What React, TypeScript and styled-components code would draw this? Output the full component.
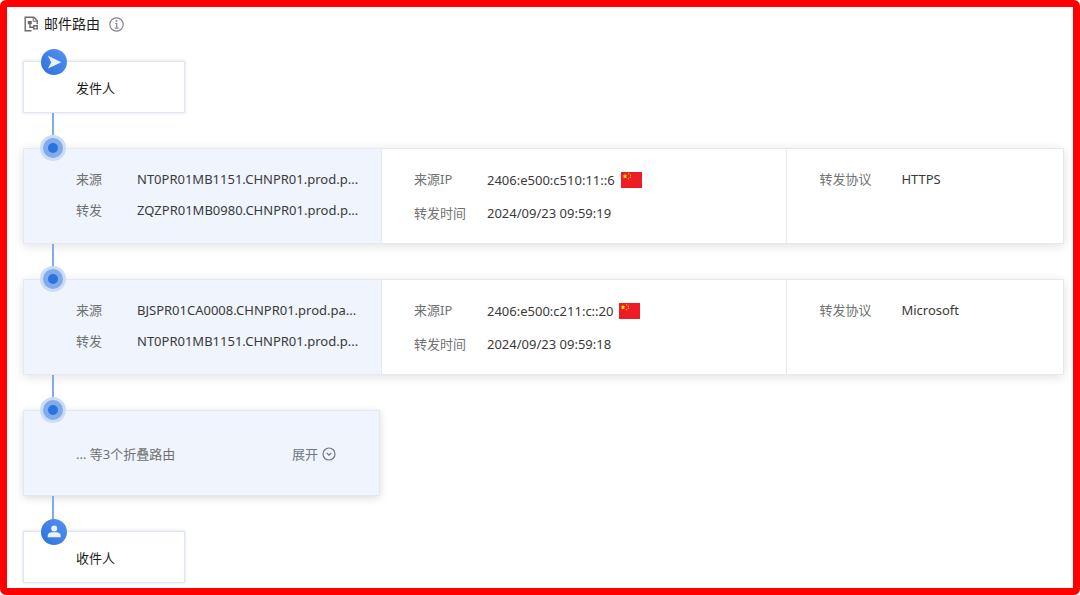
import React from "react";
import styled, { createGlobalStyle } from "styled-components";

const GlobalStyle = createGlobalStyle`
  * { box-sizing: border-box; }
  html, body { margin: 0; background: #fff; }
  body {
    font-family: "Noto Sans", "Noto Sans CJK SC", sans-serif;
    font-size: 13px;
    line-height: 20px;
    color: #3a3a3a;
  }
`;

const Page = styled.main`
  min-height: 100vh;
  padding: 7px 9px 5px 16px;
  border: 7px solid #fe0000;
  border-radius: 6px;
  background: #fff;
`;

const Header = styled.header`
  display: flex;
  align-items: center;
  height: 20px;
  gap: 5px;
`;

const Title = styled.h1`
  margin: 0 4px 0 0;
  font-size: 14px;
  line-height: 20px;
  font-weight: 400;
  color: #1c1c1c;
`;

const IconButton = styled.button`
  display: flex;
  padding: 0;
  border: 0;
  background: none;
  color: #85859a;
  cursor: pointer;
`;

const Timeline = styled.ol`
  list-style: none;
  margin: 27px 0 0;
  padding: 0;
  display: flex;
  flex-direction: column;
  gap: 35px;
`;

const Step = styled.li`
  position: relative;

  &:not(:last-child)::after {
    content: "";
    position: absolute;
    top: 100%;
    left: 29px;
    width: 2px;
    height: 35px;
    background: #82abea;
  }
`;

const Marker = styled.span`
  position: absolute;
  z-index: 1;
  top: -13px;
  left: 17px;
  display: flex;
`;

const EndCard = styled.div`
  width: 162px;
  height: 52px;
  padding: 16px 52px;
  border: 1px solid #dfe5f1;
  box-shadow: 0 0 3px rgba(90, 120, 190, 0.25);
  background: #fff;
  color: #1c1c1c;
`;

const HopCard = styled.article`
  display: grid;
  grid-template-columns: 357px 406fr 277fr;
  height: 96px;
  border: 1px solid #e6e9ef;
  box-shadow: 0 2px 10px rgba(0, 0, 0, 0.12);
  background: #fff;
`;

const Fields = styled.dl<{ $tinted?: boolean; $labelWidth: number }>`
  display: grid;
  grid-template-columns: ${(p) => p.$labelWidth}px 1fr;
  align-content: start;
  row-gap: ${(p) => (p.$tinted ? 11 : 12)}px;
  margin: 0;
  padding: 20px 0 0 ${(p) => (p.$tinted ? 52 : 32)}px;
  background: ${(p) => (p.$tinted ? "#eff4fd" : "#fff")};
  white-space: nowrap;

  & + & { border-left: 1px solid #e3e8f2; }
`;

const Label = styled.dt`
  color: #717171;
`;

const Value = styled.dd<{ $tall?: boolean }>`
  display: flex;
  align-items: center;
  gap: 6px;
  height: ${(p) => (p.$tall ? 22 : 20)}px;
  margin: 0;
`;

const FoldedCard = styled.div`
  display: flex;
  align-items: center;
  justify-content: space-between;
  width: 357px;
  height: 86px;
  padding: 2px 43px 0 52px;
  border: 1px solid #e3e7ee;
  box-shadow: 0 2px 8px rgba(0, 0, 0, 0.14);
  background: #eff4fd;
  color: #717171;
`;

const ExpandButton = styled.button`
  display: flex;
  align-items: center;
  gap: 4px;
  padding: 0;
  border: 0;
  background: none;
  font: inherit;
  color: #717584;
  cursor: pointer;
`;

const RouteIcon = () => (
  <svg width="16" height="16" viewBox="0 0 16 16" fill="none" stroke="#6a6a6a" strokeWidth="1.4">
    <path d="M8.5 14.8H2.2V1.2H10.8L14.2 4.6V8.2" />
    <path d="M10.2 1.4V5.2H14" strokeWidth="1" />
    <path d="M4.8 5h4v3.2h-4z" fill="#6a6a6a" stroke="none" />
    <path d="M7 8v3.2h3.5" />
    <path d="M10.8 9.7h3.4v3.2h-3.4z" />
  </svg>
);

const InfoIcon = () => (
  <svg width="15" height="15" viewBox="0 0 15 15" fill="none" stroke="currentColor" strokeWidth="1.2">
    <circle cx="7.5" cy="7.5" r="6.7" />
    <path d="M6.2 6.5h1.5v4.6M5.8 11.1h3.7" />
    <circle cx="7.5" cy="4" r="1" fill="currentColor" stroke="none" />
  </svg>
);

const ChevronIcon = () => (
  <svg width="14" height="14" viewBox="0 0 14 14" fill="none" stroke="currentColor" strokeWidth="1.2">
    <circle cx="7" cy="7" r="6" />
    <path d="M4.8 6 7 8.2 9.2 6" />
  </svg>
);

const DotMarker = () => (
  <Marker>
    <svg width="26" height="26" viewBox="0 0 26 26">
      <circle cx="13" cy="13" r="13" fill="#cbdcf6" />
      <circle cx="13" cy="13" r="10" fill="#82abea" />
      <circle cx="13" cy="13" r="5" fill="#2b73de" />
    </svg>
  </Marker>
);

const EndMarker = ({ id, children }: { id: string; children: React.ReactNode }) => (
  <Marker>
    <svg width="28" height="28" viewBox="0 0 28 28">
      <defs>
        <linearGradient id={id} x1="1" y1="0" x2="0" y2="1">
          <stop offset="0" stopColor="#5793f2" />
          <stop offset="1" stopColor="#2a70dc" />
        </linearGradient>
      </defs>
      <circle cx="14" cy="14" r="13" fill={`url(#${id})`} />
      {children}
    </svg>
  </Marker>
);

const Flag = () => (
  <svg width="21" height="16" viewBox="0 0 21 16" role="img" aria-label="CN">
    <path d="M0 0h21v16H0z" fill="#ee1c25" />
    <path d="M4 1.8l.7 1.6 1.7.1-1.3 1.1.4 1.7L4 5.4l-1.5.9.4-1.7-1.3-1.1 1.7-.1z" fill="#ff0" />
    <g fill="#f9b50f">
      <circle cx="7.6" cy="1.7" r=".7" />
      <circle cx="9.4" cy="3.2" r=".7" />
      <circle cx="9.4" cy="5.3" r=".7" />
      <circle cx="7.6" cy="6.8" r=".7" />
    </g>
  </svg>
);

const hops = [
  {
    source: "NT0PR01MB1151.CHNPR01.prod.p...",
    relay: "ZQZPR01MB0980.CHNPR01.prod.p...",
    ip: "2406:e500:c510:11::6",
    time: "2024/09/23 09:59:19",
    protocol: "HTTPS",
  },
  {
    source: "BJSPR01CA0008.CHNPR01.prod.pa...",
    relay: "NT0PR01MB1151.CHNPR01.prod.p...",
    ip: "2406:e500:c211:c::20",
    time: "2024/09/23 09:59:18",
    protocol: "Microsoft",
  },
];

export default function App() {
  return (
    <Page>
      <GlobalStyle />
      <Header>
        <RouteIcon />
        <Title>邮件路由</Title>
        <IconButton aria-label="说明"><InfoIcon /></IconButton>
      </Header>
      <Timeline>
        <Step>
          <EndMarker id="sender">
            <path d="M8 7.8 21.4 14.2 8 20.6 11.2 14.2z" fill="#e9f1fd" />
          </EndMarker>
          <EndCard>发件人</EndCard>
        </Step>
        {hops.map((hop) => (
          <Step key={hop.ip}>
            <DotMarker />
            <HopCard>
              <Fields $tinted $labelWidth={61}>
                <Label>来源</Label>
                <Value>{hop.source}</Value>
                <Label>转发</Label>
                <Value>{hop.relay}</Value>
              </Fields>
              <Fields $labelWidth={73}>
                <Label>来源IP</Label>
                <Value $tall>{hop.ip}<Flag /></Value>
                <Label>转发时间</Label>
                <Value>{hop.time}</Value>
              </Fields>
              <Fields $labelWidth={82}>
                <Label>转发协议</Label>
                <Value>{hop.protocol}</Value>
              </Fields>
            </HopCard>
          </Step>
        ))}
        <Step>
          <DotMarker />
          <FoldedCard>
            <span>... 等3个折叠路由</span>
            <ExpandButton>展开<ChevronIcon /></ExpandButton>
          </FoldedCard>
        </Step>
        <Step>
          <EndMarker id="recipient">
            <circle cx="14.2" cy="10.4" r="3" fill="#e9f1fd" />
            <path d="M7.7 19.3v-1.6c0-2.3 2-3.5 4-3.5h5c2 0 4 1.2 4 3.5v1.6z" fill="#e9f1fd" />
          </EndMarker>
          <EndCard>收件人</EndCard>
        </Step>
      </Timeline>
    </Page>
  );
}
